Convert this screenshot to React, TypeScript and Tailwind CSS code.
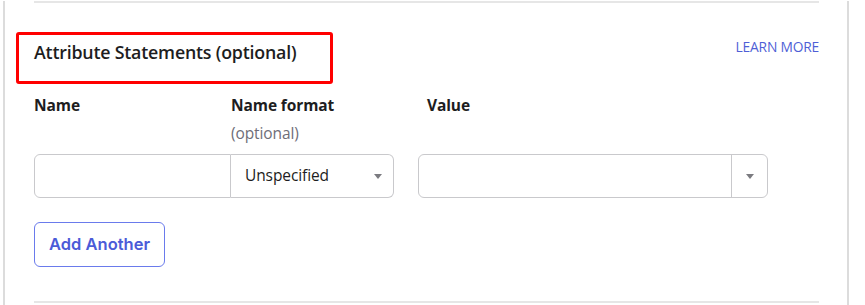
import React from 'react'

function Caret() {
  return (
    <svg width="8" height="5" viewBox="0 0 8 5" className="shrink-0">
      <path d="M0 0 L8 0 L4 5 Z" fill="#7b7b80" />
    </svg>
  )
}

export default function App() {
  return (
    <div className="w-[865px] h-[305px] bg-white overflow-hidden font-['Open_Sans',sans-serif]">
      <div className="relative ml-[3px] w-[846px] h-[305px] border-l-2 border-r-2 border-[#dcdcdc] pl-[29px] pr-[28px]">
        <div className="mt-[1px] h-[2px] bg-[#e6e6e6]" />

        {/* annotation box */}
        <div className="absolute left-[11px] top-[31px] w-[317px] h-[52px] border-[3px] border-[#ff0000] rounded-[3px]" />

        <div className="mt-[32px] flex items-start justify-between">
          <h2 className="text-[17.8px] leading-[34px] font-semibold text-[#1d1d21] tracking-[-0.2px]">
            Attribute Statements (optional)
          </h2>
          <a className="mt-[-5px] text-[13.8px] leading-[34px] text-[#4f5fd6] tracking-[-0.2px]">
            LEARN MORE
          </a>
        </div>

        <div className="mt-[25px] flex text-[15.5px] font-bold text-[#1d1d21] leading-[22px] tracking-[-0.1px]">
          <div className="w-[197px]">Name</div>
          <div className="w-[196px]">
            <div>Name format</div>
            <div className="mt-[6px] font-normal text-[#6e6e78]">(optional)</div>
          </div>
          <div>Value</div>
        </div>

        <div className="mt-[10px] flex">
          <div className="w-[197px] h-[44px] border border-[#c9c9cc] rounded-l-[6px]" />
          <div className="w-[163px] h-[44px] border border-l-0 border-[#c9c9cc] rounded-r-[6px] flex items-center justify-between pl-[14px] pr-[11px] text-[15.5px] text-[#1d1d21] tracking-[-0.1px]">
            <span>Unspecified</span>
            <Caret />
          </div>
          <div className="ml-[24px] w-[350px] h-[44px] border border-[#c9c9cc] rounded-[6px] flex">
            <div className="flex-1 border-r border-[#c9c9cc]" />
            <div className="w-[35px] flex items-center justify-center">
              <Caret />
            </div>
          </div>
        </div>

        <button className="mt-[24px] w-[131px] h-[45px] border border-[#6a7bec] rounded-[6px] text-[16.5px] font-semibold text-[#4b5bd8] font-['Inter',sans-serif]">
          Add Another
        </button>

        <div className="absolute left-[29px] right-[28px] top-[300px] h-[2px] bg-[#e6e6e6]" />
      </div>
    </div>
  )
}
